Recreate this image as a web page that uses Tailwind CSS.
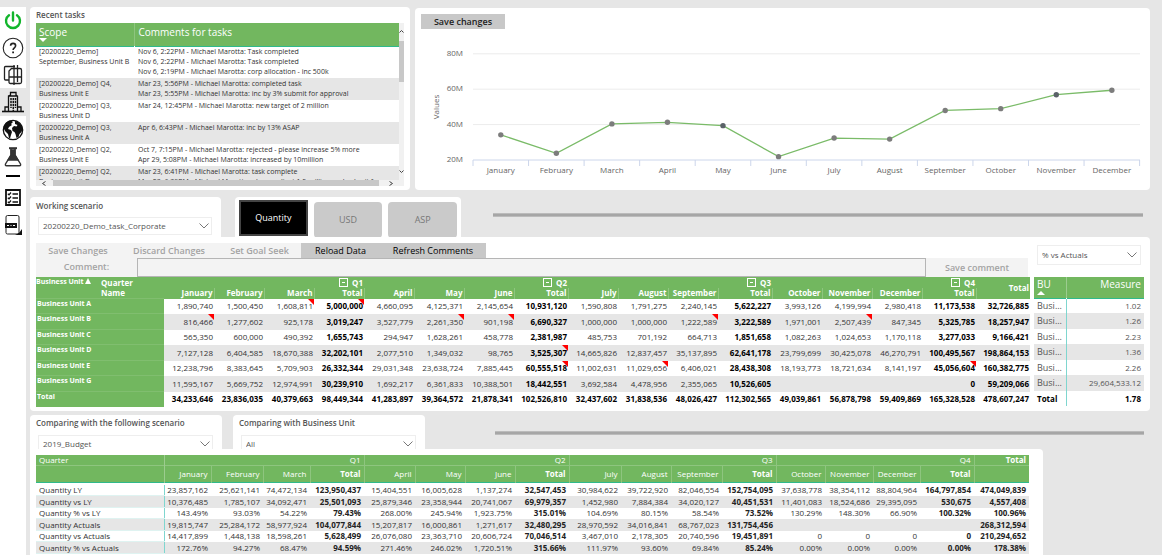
<!DOCTYPE html>
<html lang="en">
<head>
  <meta charset="UTF-8" />
  <meta name="viewport" content="width=device-width, initial-scale=1.0"/>
  <title>Planning Dashboard</title>
  <script src="https://cdn.jsdelivr.net/npm/@tailwindcss/browser@4"></script>
</head>
<body class="flex min-h-screen bg-[#e6e6e6] font-['Open_Sans','Noto_Sans',sans-serif] text-[8px] leading-[10px] text-[#333]">
  <!-- Sidebar -->
  <nav class="mt-[7px] flex w-[26px] shrink-0 flex-col bg-white text-black">
    <a href="#" aria-label="Power" class="flex h-[27px] items-center justify-center">
      <svg class="h-5 w-5" viewBox="0 0 20 20" fill="none" stroke="#12b52c" stroke-width="2.4" stroke-linecap="round"><path d="M10 1.5v8M6 4.2a7 7 0 1 0 8 0"/></svg>
    </a>
    <a href="#" aria-label="Help" class="flex h-[27px] items-center justify-center">
      <svg class="h-[22px] w-[22px]" viewBox="0 0 22 22" fill="none" stroke="#222"><circle cx="11" cy="11" r="9.8" stroke-width="1.1"/><path d="M8.6 8.8c0-3.2 5-3.2 5 0 0 2-2.5 2-2.5 4.2" stroke-width="1.6"/><path d="M11.1 14.4v1.8" stroke-width="1.8"/></svg>
    </a>
    <a href="#" aria-label="Copy" class="flex h-[27px] items-center justify-center">
      <svg class="h-[22px] w-5" viewBox="0 0 20 22" fill="none" stroke="#222" stroke-width="1.3"><path d="M6 16H2.500Q1.500 16 1.500 15V3.500Q1.500 2.500 2.500 2.500H12"/><path d="M8.500 4.500H17Q18.500 4.500 18.500 6V18Q18.500 19.500 17 19.500H7.500Q6 19.500 6 18V7z"/><path d="M11 1v20M14.500 1v17M6 13h13"/></svg>
    </a>
    <a href="#" aria-label="Company" class="flex h-[28px] items-center justify-center bg-[#e6e6e6]">
      <svg class="h-[22px] w-[22px]" viewBox="0 0 22 22" fill="none" stroke="#111" stroke-width="1.3"><path d="M0 20.500h22" stroke-width="1.6"/><path d="M6.500 20V5l2-1V1.500H14V4l1.500 1V20M3 20v-4h3M16 16h3v4M6.500 5h9"/><path d="M9 7v10M11.300 7v13M13.500 7v10" stroke-width="1.5" stroke-dasharray="2.200 .8"/></svg>
    </a>
    <a href="#" aria-label="World" class="flex h-[27px] items-center justify-center">
      <svg class="h-[22px] w-[22px]" viewBox="0 0 22 22"><circle cx="11" cy="11" r="9.700" fill="#fff" stroke="#111" stroke-width="1.300"/><path fill="#111" d="M1.500 9C2 5 5 2 9 1.500l2 1.500-2 2 1 1-3 2-1 2 3 1 1 2-1 3-1 3.500-1-.500-1-4-3-3zM13 2c4 .5 7.500 4 7.500 8l-1 3-2 2-1 3-2 1-1-4-1-2-2-1-.5-3 2-2 2.500.500 1-1.500-2.500-1z"/></svg>
    </a>
    <a href="#" aria-label="Experiments" class="flex h-[27px] items-center justify-center">
      <svg class="h-5 w-[18px]" viewBox="0 0 18 20" fill="none" stroke="#333" stroke-width="1.400"><path d="M5 1.200h8" stroke-width="2"/><path d="M7 2v6L1.500 17Q1 18.800 2.500 18.800h13Q17 18.800 16.500 17L11 8V2"/><path fill="#333" d="M7 3h4v5l3 5H4l3-5z"/></svg>
    </a>
    <span class="mt-[5px] ml-[6px] h-[2px] w-[14px] bg-black"></span>
    <a href="#" aria-label="Checklist" class="mt-[6px] flex h-[28px] items-center justify-center">
      <svg class="h-[17px] w-4" viewBox="0 0 16 17" fill="none" stroke="#111" stroke-width="1.500"><path d="M1 1h14v15H1z" stroke-width="1.800"/><path d="M7.500 5h5.500M7.500 9h5.500M7.500 13h5.500"/><path d="M2.800 4.800l1.200 1 2-2.300M2.800 8.800l1.200 1 2-2.300M2.800 12.800l1.200 1 2-2.300" stroke-width="1.200"/></svg>
    </a>
    <a href="#" aria-label="Report" class="flex h-[27px] items-center justify-center">
      <svg class="h-5 w-[18px]" viewBox="0 0 18 20" fill="none" stroke="#222" stroke-width="1"><path d="M2 8V2Q2 .5 3.500.5h10Q15 .5 15 2v16l-1 1H3.500Q2 19 2 17.500z"/><path fill="#111" stroke="none" d="M1 8h12v5H1zM18 14v6h-7l4-2z"/><path stroke="#fff" d="M3 10.500h2M6.500 10.500h1M9 10.500h2"/></svg>
    </a>
  </nav>

  <main class="flex min-w-0 flex-1 flex-col pt-[7px] pr-3 pl-1">
    <div class="flex gap-[5px]">
      <!-- Recent tasks -->
      <section class="w-[380px] shrink-0 rounded bg-white px-[6px] pb-1">
        <h2 class="h-4 pt-[3px] font-semibold text-[#555]">Recent tasks</h2>
        <div class="flex">
          <div class="h-[157px] min-w-0 flex-1 overflow-hidden">
            <table class="w-full table-fixed text-left text-[7px]">
              <colgroup><col class="w-[98px]"/><col/></colgroup>
              <thead class="bg-[#72b75f] text-[10px] text-white">
                <tr class="h-[23px] border-b border-[#2fb98c] align-top">
                  <th class="border-r border-white/20 pl-[3px] font-normal"><span class="block h-[15px] pt-1">Scope</span><svg class="h-[4px] w-2" viewBox="0 0 8 4"><path fill="#fff" d="M0 0h8L4 4z"/></svg></th>
                  <th class="pt-1 pl-1 font-normal">Comments for tasks</th>
                </tr>
              </thead>
              <tbody id="tasks"></tbody>
            </table>
          </div>
          <div class="flex w-[5px] flex-col items-center bg-[#f1f1f1]">
            <svg class="mt-[7px] h-[3px] w-[5px]" viewBox="0 0 5 3" fill="none" stroke="#444"><path d="M.5 2.500l2-2 2 2"/></svg>
            <span class="mt-2 h-[41px] w-full bg-[#c8c8c8]"></span>
            <svg class="mt-auto mb-[7px] h-[3px] w-[5px]" viewBox="0 0 5 3" fill="none" stroke="#444"><path d="M.5.5l2 2 2-2"/></svg>
          </div>
        </div>
        <div class="flex h-[6px] items-center bg-[#f1f1f1] pl-[6px]">
          <svg class="h-[5px] w-[4px]" viewBox="0 0 4 5" fill="none" stroke="#444"><path d="M3.500.5l-3 2 3 2"/></svg>
          <span class="ml-[7px] h-full w-[326px] bg-[#c8c8c8]"></span>
          <svg class="ml-[10px] h-[5px] w-[4px]" viewBox="0 0 4 5" fill="none" stroke="#444"><path d="M.5.5l3 2-3 2"/></svg>
        </div>
      </section>

      <!-- Monthly values chart -->
      <section class="mt-px min-w-0 flex-1 rounded bg-white px-[6px] pt-[6px]">
        <button class="block h-[15px] w-[84px] bg-[#c8c8c8] text-[9px] font-semibold text-[#222]">Save changes</button>
        <svg id="chart" class="w-full" viewBox="421 29 723 159" font-size="8" fill="#666"></svg>
      </section>
    </div>

    <!-- Scenario and measure pickers -->
    <div class="mt-[7px] flex h-10 items-start">
      <section class="h-full w-[191px] rounded-t bg-white px-2">
        <label for="scenario" class="-ml-[2px] block h-5 pt-[4px] font-semibold text-[#555]">Working scenario</label>
        <div class="relative w-[174px]">
          <select id="scenario" class="h-[18px] w-full appearance-none border border-[#eee] bg-white pl-1 text-[#555]"><option>20200220_Demo_task_Corporate</option></select>
          <svg class="absolute top-[6px] right-[3px] h-[6px] w-[10px]" viewBox="0 0 10 6" fill="none" stroke="#777"><path d="M.5.5L5 5 9.500.5"/></svg>
        </div>
      </section>
      <div class="ml-[14px] flex h-full w-[226px] gap-[6px] rounded-t bg-white px-1 pt-[3px]">
        <button class="h-9 w-[69px] border-2 border-[#444] bg-black text-[9px] font-medium text-white">Quantity</button>
        <button class="mt-[2px] h-9 w-[69px] rounded bg-[#cacaca] text-[9px] text-[#777]">USD</button>
        <button class="mt-[2px] h-9 w-[69px] rounded bg-[#cacaca] text-[9px] text-[#777]">ASP</button>
      </div>
      <div class="mt-4 mr-[7px] ml-8 h-1 flex-1 border-y border-[#bbb] bg-[#a6a6a6]"></div>
    </div>

    <!-- Planning grid -->
    <section class="flex rounded-b rounded-tr bg-white pt-[6px] pr-[6px] pb-1 pl-[6px]">
      <div class="min-w-0 flex-1">
        <div class="flex h-[15px] text-[9px] font-semibold">
          <button class="w-[84px] bg-[#f3f3f3] text-[#a3a3a3]" disabled>Save Changes</button>
          <button class="w-[98px] bg-[#f3f3f3] text-[#a3a3a3]" disabled>Discard Changes</button>
          <button class="w-[83px] bg-[#f3f3f3] text-[#a3a3a3]" disabled>Set Goal Seek</button>
          <button class="w-[79px] bg-[#c8c8c8] font-medium text-black">Reload Data</button>
          <button class="w-[106px] bg-[#c8c8c8] font-medium text-black">Refresh Comments</button>
        </div>
        <div class="flex h-[19px] bg-[#f3f3f3] text-[9px] font-semibold text-[#a3a3a3]">
          <label for="comment" class="w-[101px] pt-1 text-center">Comment:</label>
          <input id="comment" type="text" class="h-full min-w-0 flex-1 border border-[#b5b5b5] bg-[#f3f3f3] px-1"/>
          <button class="w-[102px]">Save comment</button>
        </div>
        <table class="w-full table-fixed text-right">
          <colgroup>
            <col class="w-[65px]"/><col class="w-[63px]"/>
            <col class="w-[50px]"/><col class="w-[50px]"/><col class="w-[50px]"/><col class="w-[50px]"/>
            <col class="w-[50px]"/><col class="w-[50px]"/><col class="w-[50px]"/><col class="w-[54px]"/>
            <col class="w-[50px]"/><col class="w-[50px]"/><col class="w-[50px]"/><col class="w-[54px]"/>
            <col class="w-[50px]"/><col class="w-[50px]"/><col class="w-[50px]"/><col class="w-[54px]"/><col class="w-[54px]"/>
          </colgroup>
          <thead id="planHead" class="bg-[#72b75f] text-white"></thead>
          <tbody id="planBody"></tbody>
        </table>
      </div>

      <div class="ml-[6px] w-[110px] shrink-0">
        <div class="relative mt-[2px] mr-[3px] mb-3 ml-[3px]">
          <select aria-label="Measure" class="block h-5 w-full appearance-none border border-[#eee] bg-white pl-1 text-[#555]"><option>% vs Actuals</option></select>
          <svg class="absolute top-[7px] right-[4px] h-[6px] w-[10px]" viewBox="0 0 10 6" fill="none" stroke="#777"><path d="M.5.5L5 5 9.500.5"/></svg>
        </div>
        <table class="w-full table-fixed">
          <colgroup><col class="w-8"/><col/></colgroup>
          <thead class="bg-[#72b75f] text-[10px] text-white">
            <tr class="h-[21px] border-b border-[#2fb98c] align-top">
              <th class="border-r border-white/30 pl-[3px] text-left font-normal"><span class="block h-[14px] pt-[2px]">BU</span><svg class="h-[4px] w-2" viewBox="0 0 8 4"><path fill="#fff" d="M0 4h8L4 0z"/></svg></th>
              <th class="pt-[2px] pr-[3px] text-right font-normal">Measure</th>
            </tr>
          </thead>
          <tbody id="measures"></tbody>
        </table>
      </div>
    </section>

    <!-- Comparison pickers -->
    <div class="mt-1 flex h-[34px] items-start">
      <section class="h-full w-[192px] overflow-hidden rounded-t bg-white px-2">
        <label for="compareScenario" class="-ml-[2px] block h-5 pt-[3px] font-semibold text-[#555]">Comparing with the following scenario</label>
        <div class="relative w-[175px]">
          <select id="compareScenario" class="h-[18px] w-full appearance-none border border-[#eee] bg-white pl-1 text-[#555]"><option>2019_Budget</option></select>
          <svg class="absolute top-[6px] right-[3px] h-[6px] w-[10px]" viewBox="0 0 10 6" fill="none" stroke="#777"><path d="M.5.5L5 5 9.500.5"/></svg>
        </div>
      </section>
      <section class="ml-[11px] h-full w-[192px] overflow-hidden rounded-t bg-white px-2">
        <label for="compareUnit" class="-ml-[2px] block h-5 pt-[3px] font-semibold text-[#555]">Comparing with Business Unit</label>
        <div class="relative w-[175px]">
          <select id="compareUnit" class="h-[18px] w-full appearance-none border border-[#eee] bg-white pl-1 text-[#555]"><option>All</option></select>
          <svg class="absolute top-[6px] right-[3px] h-[6px] w-[10px]" viewBox="0 0 10 6" fill="none" stroke="#777"><path d="M.5.5L5 5 9.500.5"/></svg>
        </div>
      </section>
      <div class="mt-4 mr-[6px] ml-[70px] h-1 flex-1 border-y border-[#bbb] bg-[#a6a6a6]"></div>
    </div>

    <!-- Comparison table -->
    <section class="mr-[107px] flex-1 rounded-tr bg-white pt-[6px] pr-[14px] pl-[6px]">
      <table class="w-full table-fixed text-right">
        <colgroup>
          <col class="w-[128px]"/>
          <col class="w-[47px]"/><col class="w-[52px]"/><col class="w-[47px]"/><col class="w-[54px]"/>
          <col class="w-[51px]"/><col class="w-[50px]"/><col class="w-[50px]"/><col class="w-[54px]"/>
          <col class="w-[52px]"/><col class="w-[50px]"/><col class="w-[51px]"/><col class="w-[54px]"/>
          <col class="w-[49px]"/><col class="w-[48px]"/><col class="w-[47px]"/><col class="w-[54px]"/><col class="w-[55px]"/>
        </colgroup>
        <thead id="compareHead" class="bg-[#72b75f] text-white"></thead>
        <tbody id="compareBody"></tbody>
      </table>
    </section>
  </main>

  <script>
    const columns = ["January", "February", "March", "Q1", "April", "May", "June", "Q2", "July", "August", "September", "Q3", "October", "November", "December", "Q4"];
    const isTotal = i => i % 4 === 3 || i === 16;

    // Recent tasks
    const tasks = [
      ["[20200220_Demo]<br>September, Business Unit B", "Nov 6, 2:22PM - Michael Marotta: Task completed<br>Nov 6, 2:22PM - Michael Marotta: Task completed<br>Nov 6, 2:19PM - Michael Marotta: corp allocation - inc 500k"],
      ["[20200220_Demo] Q4,<br>Business Unit E", "Mar 23, 5:56PM - Michael Marotta: completed task<br>Mar 23, 5:55PM - Michael Marotta: inc by 3% submit for approval"],
      ["[20200220_Demo] Q3,<br>Business Unit D", "Mar 24, 12:45PM - Michael Marotta: new target of 2 million"],
      ["[20200220_Demo] Q3,<br>Business Unit A", "Apr 6, 6:43PM - Michael Marotta: inc by 13% ASAP"],
      ["[20200220_Demo] Q2,<br>Business Unit E", "Oct 7, 7:15PM - Michael Marotta: rejected - please increase 5% more<br>Apr 29, 5:08PM - Michael Marotta: increased by 10million"],
      ["[20200220_Demo] Q2,<br>Business Unit D", "Mar 23, 6:41PM - Michael Marotta: task complete<br>Mar 23, 6:39PM - Michael Marotta: please adjust 1.5 million and submit for"]
    ];
    document.getElementById("tasks").innerHTML = tasks.map(([scope, text], i) => `
      <tr class="align-top even:bg-[#e6e6e6]">
        <td class="${i ? "pt-px" : ""} pb-px pl-[3px] whitespace-nowrap">${scope}</td>
        <td class="${i ? "pt-px" : ""} pb-px pl-1 whitespace-nowrap">${text}</td>
      </tr>`).join("");

    // Chart, values in millions
    const values = [34.2, 23.8, 40.4, 41.3, 39.4, 21.9, 32.4, 31.8, 48, 49, 56.9, 59.4];
    const months = columns.filter((c, i) => !isTotal(i));
    const x = i => 500.8 + i * 55.55;
    const y = v => 160 - (v - 20) * 1.77;
    let svg = "";
    [80, 60, 40, 20].forEach(v => {
      svg += `<path d="M473 ${y(v)}H1140" stroke="${v === 20 ? "#ccd6eb" : "#ececec"}"/><text x="463" y="${y(v) + 2}" text-anchor="end">${v}M</text>`;
    });
    for (let i = 0; i <= 12; i++) svg += `<path d="M${473 + i * 55.55} 160v6" stroke="#ccd6eb"/>`;
    months.forEach((m, i) => svg += `<text x="${x(i)}" y="173" text-anchor="middle">${m}</text>`);
    svg += `<text transform="translate(439 107) rotate(-90)" text-anchor="middle">Values</text>`;
    svg += `<polyline fill="none" stroke="#7abb68" stroke-width="1.300" points="${values.map((v, i) => x(i) + "," + y(v)).join(" ")}"/>`;
    values.forEach((v, i) => svg += `<circle cx="${x(i)}" cy="${y(v)}" r="2.700" fill="${i === 4 || i === 10 ? "#5a6268" : "#7c7c7c"}"/>`);
    document.getElementById("chart").innerHTML = svg;

    // Planning grid, * marks a commented cell
    const plan = [
      ["Business Unit A", "1,890,740 1,500,450 1,608,811* 5,000,000* 4,660,095 4,125,371 2,145,654 10,931,120 1,590,808 1,791,275 2,240,145 5,622,227 3,993,126 4,199,994 2,980,418 11,173,538 32,726,885"],
      ["Business Unit B", "816,466* 1,277,602 925,178 3,019,247 3,527,779 2,261,350* 901,198* 6,690,327 1,000,000 1,000,000 1,222,589* 3,222,589 1,971,001 2,507,439* 847,345 5,325,785 18,257,947"],
      ["Business Unit C", "565,350 600,000 490,392 1,655,743 294,947 1,628,261 458,778 2,381,987 485,753 701,192 664,713 1,851,658 1,082,263 1,024,653 1,170,118 3,277,033 9,166,421"],
      ["Business Unit D", "7,127,128 6,404,585 18,670,388 32,202,101 2,077,510 1,349,032 98,765 3,525,307* 14,665,826 12,837,457 35,137,895 62,641,178 23,799,699 30,425,078 46,270,791 100,495,567 198,864,153"],
      ["Business Unit E", "12,238,796 8,383,645 5,709,903 26,332,344 29,031,348 23,638,724 7,885,445 60,555,518* 11,002,631 11,029,656* 6,406,021 28,438,308 18,193,773 18,721,634 8,141,197 45,056,604* 160,382,775"],
      ["Business Unit G", "11,595,167 5,669,752 12,974,991 30,239,910 1,692,217 6,361,833 10,388,501 18,442,551 3,692,584 4,478,956 2,355,065 10,526,605 - - - 0 59,209,066"],
      ["Total", "34,233,646 23,836,035 40,379,663 98,449,344 41,283,897 39,364,572 21,878,341 102,526,810 32,437,602 31,838,536 48,026,427 112,302,565 49,039,861 56,878,798 59,409,869 165,328,528 478,607,247"]
    ];
    document.getElementById("planHead").innerHTML = `
      <tr class="h-[11px]">
        <th rowspan="2" class="text-left align-top text-[7px] whitespace-nowrap">Business Unit <svg class="inline h-[6px] w-[6px] align-baseline" viewBox="0 0 6 6"><path fill="#fff" d="M0 6h6L3 0z"/></svg></th>
        <th class="text-left">Quarter</th>
        ${columns.map((c, i) => isTotal(i) ? `<th class="pr-px"><span class="flex items-center justify-end gap-1"><button class="flex h-[9px] w-[9px] items-center justify-center border border-white" aria-label="Collapse ${c}"><span class="h-px w-[3px] bg-white"></span></button>${c}</span></th>` : "<th></th>").join("")}
        <th rowspan="2" class="pr-px">Total</th>
      </tr>
      <tr class="h-[10px]">
        <th class="text-left">Name</th>
        ${columns.map((c, i) => `<th class="border-r border-white/20 pr-px">${isTotal(i) ? "Total" : c}</th>`).join("")}
      </tr>`;
    document.getElementById("planBody").innerHTML = plan.map(([name, cells]) => `
      <tr class="h-[15px] even:h-4 even:bg-[#e6e6e6]">
        <th colspan="2" class="border-t border-white/10 bg-[#72b75f] pl-px text-left align-top text-[7px] text-white">${name}</th>
        ${cells.split(" ").map((v, i) => `<td class="relative pr-px ${isTotal(i) || name === "Total" ? "font-bold text-black" : ""}">${v === "-" ? "" : v.replace("*", "")}${v.endsWith("*") ? `<i class="absolute top-0 right-0 border-t-[6px] border-l-[6px] border-t-[#f00] border-l-transparent"></i>` : ""}</td>`).join("")}
      </tr>`).join("");

    // Measure per business unit
    const measures = ["1.02", "1.26", "2.23", "1.36", "2.26", "29,604,533.12"];
    document.getElementById("measures").innerHTML = measures.map(m => `
      <tr class="h-[15px] even:h-4 even:bg-[#e6e6e6]">
        <td class="border-r border-[#7fd6cf] pl-[3px] text-[9px] text-[#555]">Busi...</td>
        <td class="pr-[3px] text-right text-[#555]">${m}</td>
      </tr>`).join("") + `
      <tr class="h-[15px] font-bold text-black">
        <td class="border-r border-[#7fd6cf] pl-[3px]">Total</td>
        <td class="pr-[3px] text-right">1.78</td>
      </tr>`;

    // Comparison table
    const compare = [
      ["Quantity LY", "23,857,162 25,621,141 74,472,134 123,950,437 15,404,551 16,005,628 1,137,274 32,547,453 30,984,622 39,722,920 82,046,554 152,754,095 37,638,778 38,354,112 88,804,964 164,797,854 474,049,839"],
      ["Quantity vs LY", "10,376,485 1,785,107 34,092,471 25,501,093 25,879,346 23,358,944 20,741,067 69,979,357 1,452,980 7,884,384 34,020,127 40,451,531 11,401,083 18,524,686 29,395,095 530,675 4,557,408"],
      ["Quantity % vs LY", "143.49% 93.03% 54.22% 79.43% 268.00% 245.94% 1,923.75% 315.01% 104.69% 80.15% 58.54% 73.52% 130.29% 148.30% 66.90% 100.32% 100.96%"],
      ["Quantity Actuals", "19,815,747 25,284,172 58,977,924 104,077,844 15,207,817 16,000,861 1,271,617 32,480,295 28,970,592 34,016,841 68,767,023 131,754,456 - - - - 268,312,594"],
      ["Quantity vs Actuals", "14,417,899 1,448,138 18,598,261 5,628,499 26,076,080 23,363,710 20,606,724 70,046,514 3,467,010 2,178,305 20,740,596 19,451,891 0 0 0 0 210,294,652"],
      ["Quantity % vs Actuals", "172.76% 94.27% 68.47% 94.59% 271.46% 246.02% 1,720.51% 315.66% 111.97% 93.60% 69.84% 85.24% 0.00% 0.00% 0.00% 0.00% 178.38%"]
    ];
    document.getElementById("compareHead").innerHTML = `
      <tr class="h-[11px] border-b border-white/20">
        <th class="border-r border-white/30 pl-[3px] text-left font-normal">Quarter</th>
        ${columns.map((c, i) => `<th class="pr-[3px] font-normal ${isTotal(i) ? "border-r border-white/20" : ""}">${isTotal(i) ? c : ""}</th>`).join("")}
        <th class="pr-[3px]">Total</th>
      </tr>
      <tr class="h-[17px] border-b border-[#2fb98c]">
        <th class="border-r border-white/30"></th>
        ${columns.map((c, i) => `<th class="border-r border-white/20 pr-[3px] ${isTotal(i) ? "font-bold" : "font-normal"}">${isTotal(i) ? "Total" : c}</th>`).join("")}
        <th></th>
      </tr>`;
    document.getElementById("compareBody").innerHTML = `<tr class="h-[2px]"><td></td></tr>` + compare.map(([name, cells]) => `
      <tr class="h-3 odd:bg-[#e6e6e6] even:h-[11px]">
        <th class="border-r border-b border-r-[#7fd6cf] border-b-[#dff3f1] pl-[3px] text-left font-normal">${name}</th>
        ${cells.split(" ").map((v, i) => `<td class="pr-[3px] ${isTotal(i) ? "font-bold text-[#222]" : ""}">${v === "-" ? "" : v}</td>`).join("")}
      </tr>`).join("");
  </script>
</body>
</html>
